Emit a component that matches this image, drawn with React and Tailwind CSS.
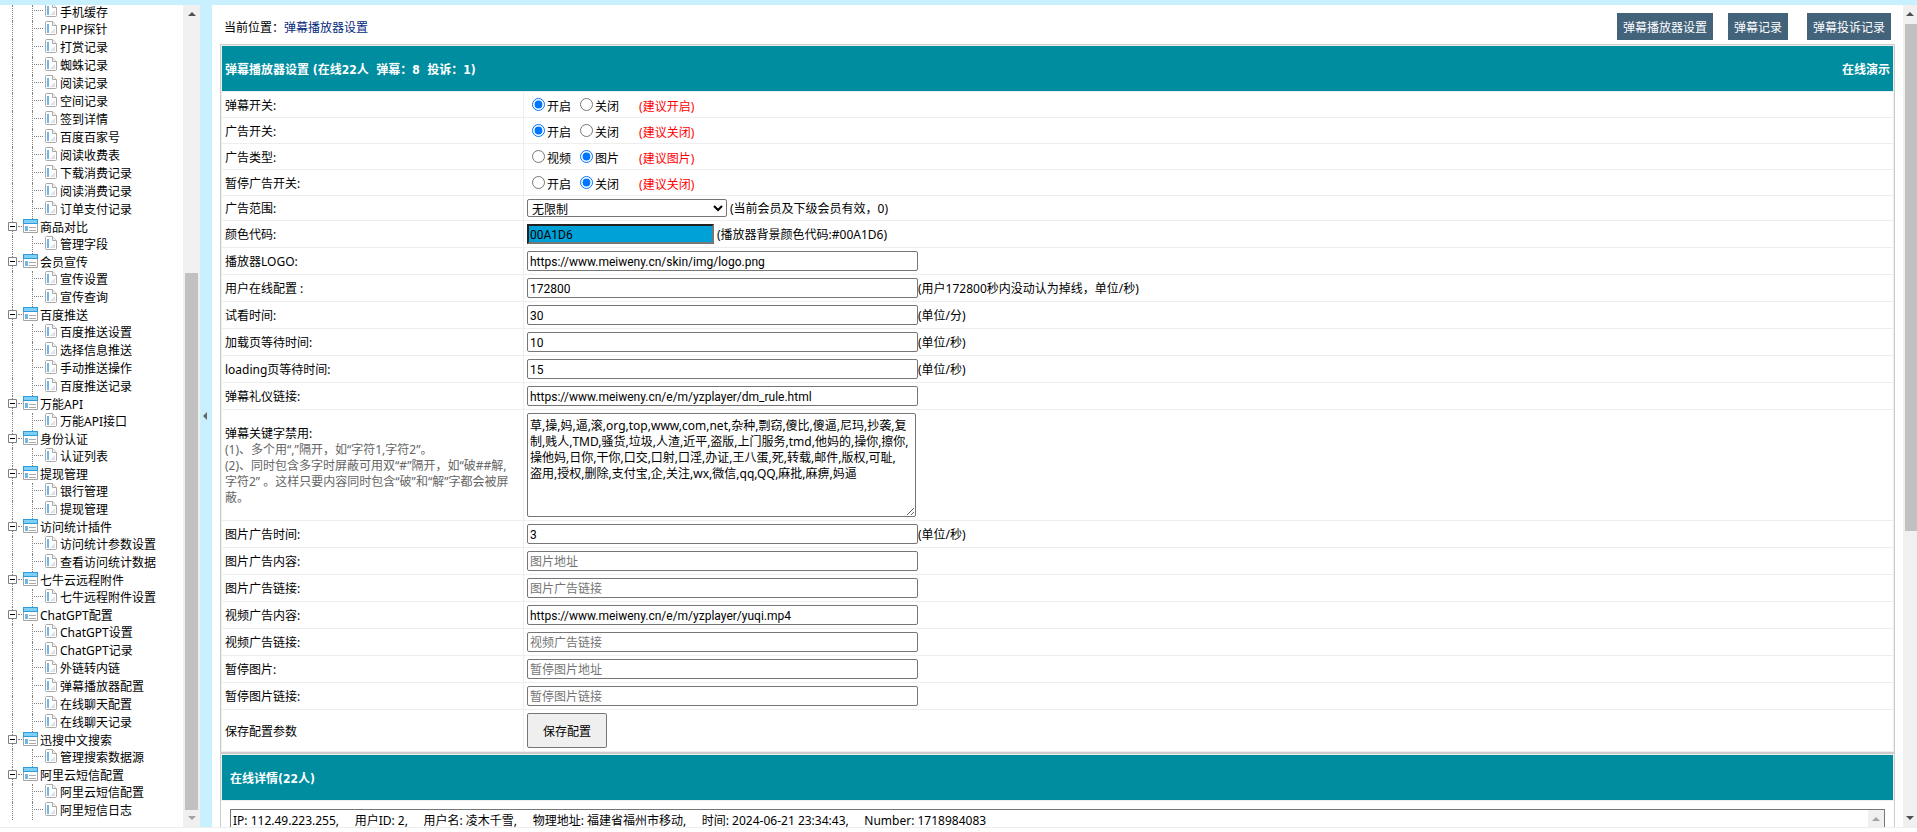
import React, { useState } from "react";

const menu = [
  {
    items: [
      "手机缓存",
      "PHP探针",
      "打赏记录",
      "蜘蛛记录",
      "阅读记录",
      "空间记录",
      "签到详情",
      "百度百家号",
      "阅读收费表",
      "下载消费记录",
      "阅读消费记录",
      "订单支付记录",
    ],
  },
  { title: "商品对比", items: ["管理字段"] },
  { title: "会员宣传", items: ["宣传设置", "宣传查询"] },
  {
    title: "百度推送",
    items: ["百度推送设置", "选择信息推送", "手动推送操作", "百度推送记录"],
  },
  { title: "万能API", items: ["万能API接口"] },
  { title: "身份认证", items: ["认证列表"] },
  { title: "提现管理", items: ["银行管理", "提现管理"] },
  { title: "访问统计插件", items: ["访问统计参数设置", "查看访问统计数据"] },
  { title: "七牛云远程附件", items: ["七牛远程附件设置"] },
  {
    title: "ChatGPT配置",
    items: [
      "ChatGPT设置",
      "ChatGPT记录",
      "外链转内链",
      "弹幕播放器配置",
      "在线聊天配置",
      "在线聊天记录",
    ],
  },
  { title: "迅搜中文搜索", items: ["管理搜索数据源"] },
  { title: "阿里云短信配置", items: ["阿里云短信配置", "阿里短信日志"] },
];

const keywords =
  "草,操,妈,逼,滚,org,top,www,com,net,杂种,剽窃,傻比,傻逼,尼玛,抄袭,复制,贱人,TMD,骚货,垃圾,人渣,近平,盗版,上门服务,tmd,他妈的,操你,擦你,操他妈,日你,干你,口交,口射,口淫,办证,王八蛋,死,转载,邮件,版权,可耻,\n盗用,授权,删除,支付宝,企,关注,wx,微信,qq,QQ,麻批,麻痹,妈逼";

const onlineUsers = [
  "IP: 112.49.223.255,",
  "用户ID: 2,",
  "用户名: 凌木千雪,",
  "物理地址: 福建省福州市移动,",
  "时间: 2024-06-21 23:34:43,",
  "Number: 1718984083",
].join("\u00a0\u00a0\u00a0\u00a0 ");

function PageIcon({ className = "" }) {
  return (
    <svg width="12" height="14" viewBox="0 0 12 14" className={`shrink-0 ${className}`}>
      <path d="M.5 1.5q0-1 1-1h6l4 4v8q0 1-1 1h-9q-1 0-1-1z" fill="#fff" stroke="#a9a9a9" />
      <path d="M7.5.5v4h4" fill="#f4f4f4" stroke="#a9a9a9" />
      <path d="M5 12l5-5v5z" fill="#dfe1e6" />
      <path d="M2 3h2v9H2z" fill="#6fb7e6" />
    </svg>
  );
}

function FolderIcon() {
  return (
    <svg width="15" height="14" viewBox="0 0 15 14" className="shrink-0">
      <path d="M.5.5h14v13H.5z" fill="#fff" stroke="#a3a3a3" />
      <path d="M0 0h15v5H0z" fill="#2f9bdc" />
      <path d="M1 1h13v3H1z" fill="#7fd0f7" />
      <path d="M2 7h3v5H2z" fill="#6fb7e6" />
      <path d="M6 8.5h7M6 11.5h7" stroke="#a9a9a9" />
    </svg>
  );
}

function ExpandIcon() {
  return (
    <svg width="9" height="9" viewBox="0 0 9 9">
      <path d="M.5.5h8v8h-8z" fill="#fff" stroke="#808080" />
      <path d="M2 4.5h5" stroke="#000" />
    </svg>
  );
}

function Arrow({ dir, color = "#505050" }) {
  return (
    <svg width="8" height="4" viewBox="0 0 8 4">
      <path d={dir === "up" ? "M0 4L4 0l4 4z" : "M0 0l4 4 4-4z"} fill={color} />
    </svg>
  );
}

function Leaf({ text, first }) {
  return (
    <li className={first ? "flex h-4" : "flex h-[18px]"}>
      <span className="ml-3 w-5 shrink-0 border-l border-dotted border-[#808080]" />
      <span className="w-[13px] shrink-0 border-l border-dotted border-[#808080]">
        <span
          className={`ml-px mr-0.5 block border-t border-dotted border-[#808080] ${first ? "mt-[5px]" : "mt-[7px]"}`}
        />
      </span>
      <PageIcon className={first ? "-mt-0.5" : ""} />
      <a
        href="#"
        className={`ml-[3px] whitespace-nowrap ${first ? "leading-4" : "leading-[18px]"}`}
      >
        {text}
      </a>
    </li>
  );
}

function Group({ title, items }) {
  const [open, setOpen] = useState(true);
  return (
    <li>
      {title && (
        <div className="flex h-[17px]">
          <span className="ml-3 w-[11px] shrink-0 border-l border-dotted border-[#808080]">
            <button
              type="button"
              aria-label={title}
              className="-ml-[5px] mt-[3px] flex"
              onClick={() => setOpen(!open)}
            >
              <ExpandIcon />
              <span className="ml-px mt-1 w-1 border-t border-dotted border-[#808080]" />
            </button>
          </span>
          <FolderIcon />
          <a href="#" className="ml-0.5 whitespace-nowrap leading-[18px]">
            {title}
          </a>
        </div>
      )}
      {open && (
        <ul>
          {items.map((item, i) => (
            <Leaf key={item} text={item} first={!title && i === 0} />
          ))}
        </ul>
      )}
    </li>
  );
}

function Row({ label, id, children, className = "h-[27px]" }) {
  return (
    <tr className={className}>
      <td className="w-[302px] border-b border-r border-[#eee] px-[3px] pt-0.5">
        {id ? <label htmlFor={id}>{label}</label> : label}
      </td>
      <td className="border-b border-[#eee] px-[3px]">{children}</td>
    </tr>
  );
}

function RadioRow({ label, name, options, value, tip }) {
  return (
    <Row label={label} className="h-[26px]">
      <div className="flex items-center pt-0.5">
        {options.map((opt) => (
          <label key={opt} className="mr-1 flex items-center">
            <input
              type="radio"
              name={name}
              defaultChecked={opt === value}
              className="mb-0.5 ml-[5px] mr-[2px] size-[13px]"
            />
            <span className="pt-0.5">{opt}</span>
          </label>
        ))}
        <span className="ml-4 pt-0.5 text-[#f00]">{tip}</span>
      </div>
    </Row>
  );
}

function TextRow({ label, id, value = "", placeholder, tip }) {
  return (
    <Row label={label} id={id}>
      <div className="flex items-center">
        <input
          id={id}
          type="text"
          defaultValue={value}
          placeholder={placeholder}
          className="h-5 w-[391px] rounded-xs border border-[#767676] px-0.5 pt-px font-['Roboto','Noto_Sans_CJK_SC',sans-serif] placeholder:text-[#757575]"
        />
        {tip && <span className="pt-0.5">{tip}</span>}
      </div>
    </Row>
  );
}

export default function App() {
  return (
    <div className="flex h-screen flex-col border-t-[5px] border-[#c9f0ff] bg-white pb-1 font-['Noto_Sans','Noto_Sans_CJK_SC',sans-serif] text-xs text-black">
      <div className="flex min-h-0 flex-1 border-b border-[#eee]">
        <nav className="w-[183px] shrink-0 overflow-hidden">
          <ul>
            {menu.map((group, i) => (
              <Group key={i} {...group} />
            ))}
          </ul>
        </nav>
        <div className="flex w-[17px] shrink-0 flex-col items-center justify-between bg-[#f0f0f0] py-[7px]">
          <Arrow dir="up" />
          <div className="mb-1.5 mt-auto h-[537px] w-[13px] bg-[#c1c1c1]" />
          <Arrow dir="down" color="#a3a3a3" />
        </div>
        <div className="flex w-3 shrink-0 items-center justify-center bg-[#c9f0ff] pr-0.5">
          <svg width="4" height="8" viewBox="0 0 4 8">
            <path d="M4 0v8L0 4z" fill="#666" />
          </svg>
        </div>

        <main className="min-w-0 flex-1 overflow-hidden px-2">
          <div className="flex h-[39px] items-center px-1">
            <p className="mt-1.5 flex-1">
              当前位置：
              <a href="#" className="text-[#03287c]">
                弹幕播放器设置
              </a>
            </p>
            <div className="mt-1 flex text-white">
              <button type="button" className="h-[27px] bg-[#43637a] px-1.5 pt-0.5">
                弹幕播放器设置
              </button>
              <button type="button" className="ml-[15px] h-[27px] bg-[#43637a] px-1.5 pt-0.5">
                弹幕记录
              </button>
              <button type="button" className="ml-[19px] h-[27px] bg-[#43637a] px-1.5 pt-0.5">
                弹幕投诉记录
              </button>
            </div>
          </div>

          <form className="border border-[#ccc]" onSubmit={(e) => e.preventDefault()}>
            <table className="w-full border-separate border-spacing-0 border border-b-0 border-[#eee]">
              <thead>
                <tr className="h-[46px] text-left text-white">
                  <th
                    colSpan={2}
                    className="border-b border-[#eee] bg-[#008d9f] bg-clip-padding px-[3px] pt-0.5 font-['DejaVu_Sans_Condensed','Noto_Sans_CJK_SC',sans-serif]"
                  >
                    <div className="flex justify-between whitespace-pre">
                      <span>弹幕播放器设置 (在线22人  弹幕：8  投诉：1)</span>
                      <a href="#">在线演示</a>
                    </div>
                  </th>
                </tr>
              </thead>
              <tbody>
                <RadioRow label="弹幕开关:" name="dm" options={["开启", "关闭"]} value="开启" tip="(建议开启)" />
                <RadioRow label="广告开关:" name="ad" options={["开启", "关闭"]} value="开启" tip="(建议关闭)" />
                <RadioRow label="广告类型:" name="adType" options={["视频", "图片"]} value="图片" tip="(建议图片)" />
                <RadioRow label="暂停广告开关:" name="pauseAd" options={["开启", "关闭"]} value="关闭" tip="(建议关闭)" />
                <Row label="广告范围:" id="group" className="h-[25px]">
                  <div className="flex items-center">
                    <select id="group" className="h-[18px] w-[200px] rounded-xs border border-[#767676] bg-white">
                      <option>无限制</option>
                    </select>
                    <span className="ml-[3px] pt-0.5">(当前会员及下级会员有效，0)</span>
                  </div>
                </Row>
                <Row label="颜色代码:" id="color">
                  <div className="flex items-center">
                    <input
                      id="color"
                      type="text"
                      defaultValue="00A1D6"
                      className="h-5 w-[187px] border-2 border-[#767676] border-l-[#222] border-t-[#222] bg-[#00a1d6] px-px pt-px font-['Roboto','Noto_Sans_CJK_SC',sans-serif]"
                    />
                    <span className="ml-[3px] pt-0.5">(播放器背景颜色代码:#00A1D6)</span>
                  </div>
                </Row>
                <TextRow label="播放器LOGO:" id="logo" value="https://www.meiweny.cn/skin/img/logo.png" />
                <TextRow label="用户在线配置 :" id="online" value="172800" tip="(用户172800秒内没动认为掉线，单位/秒)" />
                <TextRow label="试看时间:" id="trial" value="30" tip="(单位/分)" />
                <TextRow label="加载页等待时间:" id="wait" value="10" tip="(单位/秒)" />
                <TextRow label="loading页等待时间:" id="loading" value="15" tip="(单位/秒)" />
                <TextRow label="弹幕礼仪链接:" id="rule" value="https://www.meiweny.cn/e/m/yzplayer/dm_rule.html" />
                <tr className="h-[111px]">
                  <td className="border-b border-r border-[#eee] pl-[3px] pr-2 pt-0.5">
                    <label htmlFor="keywords">弹幕关键字禁用:</label>
                    <p className="text-[#666]">(1)、多个用“,”隔开，如“字符1,字符2”。</p>
                    <p className="text-[#666]">
                      (2)、同时包含多字时屏蔽可用双“#”隔开，如“破##解,字符2” 。这样只要内容同时包含“破”和“解”字都会被屏蔽。
                    </p>
                  </td>
                  <td className="border-b border-[#eee] px-[3px]">
                    <textarea
                      id="keywords"
                      defaultValue={keywords}
                      className="block h-[104px] w-[389px] rounded-xs border border-[#767676] px-0.5 py-1"
                    />
                  </td>
                </tr>
                <TextRow label="图片广告时间:" id="imgTime" value="3" tip="(单位/秒)" />
                <TextRow label="图片广告内容:" id="imgSrc" placeholder="图片地址" />
                <TextRow label="图片广告链接:" id="imgLink" placeholder="图片广告链接" />
                <TextRow label="视频广告内容:" id="videoSrc" value="https://www.meiweny.cn/e/m/yzplayer/yuqi.mp4" />
                <TextRow label="视频广告链接:" id="videoLink" placeholder="视频广告链接" />
                <TextRow label="暂停图片:" id="pauseImg" placeholder="暂停图片地址" />
                <TextRow label="暂停图片链接:" id="pauseLink" placeholder="暂停图片链接" />
                <Row label="保存配置参数" className="h-[42px]">
                  <button
                    type="submit"
                    className="block h-[35px] rounded-xs border border-[#767676] bg-[#efefef] px-[15px] pt-0.5"
                  >
                    保存配置
                  </button>
                </Row>
              </tbody>
            </table>
          </form>

          <section className="border border-[#ccc]">
            <h2 className="border border-[#eee] bg-[#008d9f] bg-clip-padding px-2 pb-[13px] pt-4 font-['DejaVu_Sans_Condensed','Noto_Sans_CJK_SC',sans-serif] font-bold text-white">
              在线详情(22人)
            </h2>
            <div className="px-[9px] pt-2">
              <div className="flex border border-[#767676]">
                <textarea
                  readOnly
                  aria-label="在线详情"
                  defaultValue={onlineUsers}
                  className="block h-[200px] flex-1 resize-none overflow-hidden px-0.5 py-[3px]"
                />
                <div className="flex w-4 justify-center bg-[#f0f0f0] pt-[7px]">
                  <Arrow dir="up" color="#a3a3a3" />
                </div>
              </div>
            </div>
          </section>
        </main>

        <div className="flex w-[14px] shrink-0 flex-col items-center justify-between bg-[#f0f0f0] py-[7px]">
          <Arrow dir="up" />
          <div className="mb-auto ml-0.5 mt-2 h-[507px] w-3 bg-[#c1c1c1]" />
          <Arrow dir="down" />
        </div>
      </div>
    </div>
  );
}
